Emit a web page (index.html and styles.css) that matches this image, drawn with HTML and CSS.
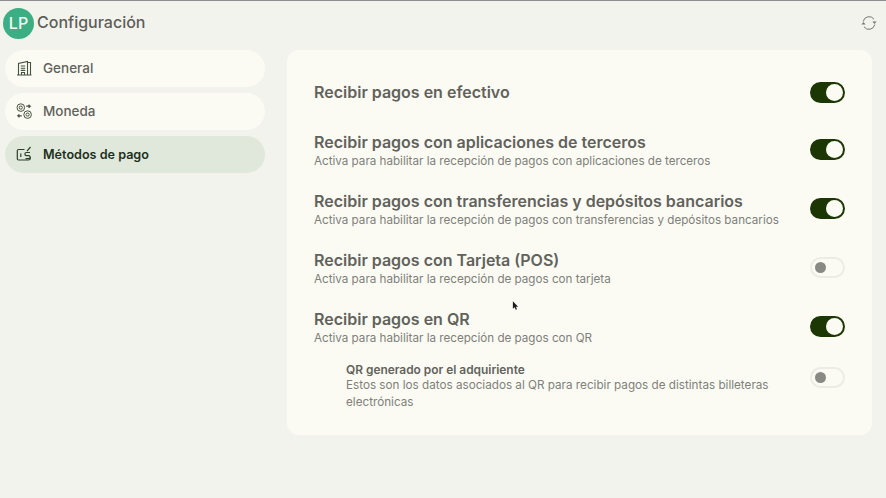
FILE: index.html
```html
<!DOCTYPE html>
<html lang="es">
<head>
<meta charset="utf-8">
<title>Configuración</title>
<link rel="stylesheet" href="styles.css">
</head>
<body>
<div class="app">
  <header class="topbar">
    <div class="brand">
      <span class="avatar">LP</span>
      <h1 class="page-title">Configuración</h1>
    </div>
    <svg class="refresh" viewBox="0 0 16 16" width="16" height="16" fill="none" stroke="#77776f" stroke-width="1">
      <path d="M2.2 6.5A6 6 0 0 1 13 4.2"/><path d="M13.8 9.5A6 6 0 0 1 3 11.8"/>
      <path d="M11.4 6.6h4.2L13.5 9z" fill="#77776f" stroke="none"/><path d="M.4 9.4h4.2L2.5 7z" fill="#77776f" stroke="none"/>
    </svg>
  </header>
  <div class="main">
    <nav class="sidebar">
      <a class="nav-item"><svg class="nav-icon" viewBox="0 0 16 16" fill="none" stroke="#44513f" stroke-width="1.1"><path d="M2.5 15V3.5L11.5 1.5V15M11.5 2.5H14.5V15M1 15H15.5M4.8 6H9.2M4.8 8.2H9.2M4.8 10.4H9.2M5.5 15V12.5H8.5V15"/></svg><span>General</span></a>
      <a class="nav-item"><svg class="nav-icon" viewBox="0 0 16 16" fill="none" stroke="#44513f" stroke-width="1"><circle cx="4.8" cy="4.6" r="3.8"/><circle cx="4.8" cy="4.6" r="1.6"/><circle cx="11.6" cy="11.6" r="3.8"/><circle cx="11.6" cy="11.6" r="1.6"/><path d="M10.2 3.2H14M12.6 1.8L14.2 3.2 12.6 4.8M5.8 12.8H2M3.4 11.4L1.8 12.8 3.4 14.4" stroke-width="1.2"/></svg><span>Moneda</span></a>
      <a class="nav-item active"><svg class="nav-icon" viewBox="0 0 16 16" fill="none" stroke="#2f4029" stroke-width="1.2"><path d="M8.5 3.5H2.5A1.2 1.2 0 0 0 1.3 4.7V12.8A1.2 1.2 0 0 0 2.5 14H12.5A1.8 1.8 0 0 0 14.3 12.2V11M4.8 7.5V11"/><path d="M14.5 1L11 5.2M14 6.5H10.5A1.6 1.6 0 0 0 10.5 9.7H13A1.5 1.5 0 0 1 13 12.6H9.5"/></svg><span>Métodos de pago</span></a>
    </nav>
    <section class="card">
      <div class="row row-first">
        <div class="row-text"><div class="row-title">Recibir pagos en efectivo</div></div>
        <span class="switch on"></span>
      </div>
      <div class="row">
        <div class="row-text"><div class="row-title">Recibir pagos con aplicaciones de terceros</div><div class="row-desc">Activa para habilitar la recepción de pagos con aplicaciones de terceros</div></div>
        <span class="switch on"></span>
      </div>
      <div class="row">
        <div class="row-text"><div class="row-title">Recibir pagos con transferencias y depósitos bancarios</div><div class="row-desc">Activa para habilitar la recepción de pagos con transferencias y depósitos bancarios</div></div>
        <span class="switch on"></span>
      </div>
      <div class="row">
        <div class="row-text"><div class="row-title">Recibir pagos con Tarjeta (POS)</div><div class="row-desc">Activa para habilitar la recepción de pagos con tarjeta</div></div>
        <span class="switch"></span>
      </div>
      <div class="row">
        <div class="row-text"><div class="row-title">Recibir pagos en QR</div><div class="row-desc">Activa para habilitar la recepción de pagos con QR</div></div>
        <span class="switch on"></span>
      </div>
      <div class="row row-sub">
        <div class="row-text"><div class="sub-title">QR generado por el adquiriente</div><div class="sub-desc">Estos son los datos asociados al QR para recibir pagos de distintas billeteras electrónicas</div></div>
        <span class="switch"></span>
      </div>
    </section>
  </div>
  <svg class="cursor" viewBox="0 0 8 12" width="7" height="11"><path d="M1 0v8.5l2-1.7 1.3 3 1.4-.6-1.3-2.9H7z" fill="#1c1c1c"/></svg>
</div>
</body>
</html>
```
FILE: styles.css
```css
* { box-sizing: border-box; }
html, body { margin: 0; height: 100%; }
body {
  background: #f3f3ee;
  font-family: "Inter", "Liberation Sans", sans-serif;
  color: #62625c;
  overflow: hidden;
}
.app {
  position: relative;
  height: 498px;
  border-top: 1px solid #8f8c92;
}
.topbar {
  display: flex;
  align-items: center;
  justify-content: space-between;
  height: 49px;
  padding: 0 9px 5px 3px;
}
.brand { display: flex; align-items: center; }
.avatar {
  width: 31px;
  height: 31px;
  border-radius: 50%;
  background: #3cae84;
  color: #f4fbf5;
  font-size: 16px;
  font-weight: 500;
  display: flex;
  align-items: center;
  justify-content: center;
}
.page-title {
  margin: 0 0 3px 3px;
  font-size: 16px;
  font-weight: 500;
  color: #5e5e59;
}
.refresh { display: block; }
.main {
  display: flex;
  align-items: flex-start;
  gap: 22px;
  padding: 0 14px 0 5px;
}
.sidebar {
  width: 260px;
  display: flex;
  flex-direction: column;
  gap: 6px;
}
.nav-item {
  height: 37px;
  border-radius: 19px;
  background: #fbfbf4;
  display: flex;
  align-items: center;
  padding-left: 11px;
  gap: 11px;
  font-size: 13.5px;
  font-weight: 500;
  color: #62625c;
}
.nav-item span { padding-bottom: 2px; }
.nav-item.active {
  background: #e0e8dc;
  color: #20301c;
  font-size: 12.6px;
  font-weight: 600;
}
.nav-item.active span { padding-bottom: 0; }
.nav-icon { width: 16px; height: 16px; flex: none; margin-bottom: 1px; }
.card {
  width: 585px;
  height: 385px;
  background: #fbfbf4;
  border-radius: 12px;
  padding: 32px 27px 0 27px;
  display: flex;
  flex-direction: column;
}
.row {
  display: flex;
  align-items: center;
  justify-content: space-between;
  height: 39px;
  margin-bottom: 20px;
}
.row-text { align-self: flex-start; padding-top: 2px; }
.row-first { height: 21px; margin-bottom: 27px; }
.row-first .row-text { padding-top: 1px; }
.row-title {
  font-size: 16px;
  font-weight: 600;
  line-height: 20px;
  margin-bottom: 1px;
  color: #62625c;
}
.row-first .row-title { line-height: 19px; margin-bottom: 0; }
.row-desc {
  font-size: 11.65px;
  line-height: 17px;
  color: #80807a;
}
.row-sub {
  height: auto;
  align-items: flex-start;
  padding-left: 32px;
  margin-top: -4px;
  margin-bottom: 0;
}
.row-sub .switch { margin-top: 5px; }
.row-sub .row-text { width: 440px; padding-top: 0; }
.sub-title {
  font-size: 11.9px;
  font-weight: 600;
  line-height: 15px;
  color: #62625c;
}
.sub-desc {
  font-size: 11.7px;
  line-height: 17px;
  color: #80807a;
}
.switch {
  position: relative;
  flex: none;
  width: 35px;
  height: 21px;
  border-radius: 11px;
  border: 2px solid #ecece6;
  background: #fbfbf4;
}
.switch::after {
  content: "";
  position: absolute;
  left: 3px;
  top: 3px;
  width: 11px;
  height: 11px;
  border-radius: 50%;
  background: #8a8a85;
}
.switch.on { background: #1c3704; border-color: #1c3704; }
.switch.on::after {
  left: 14px;
  top: 0;
  width: 17px;
  height: 17px;
  background: #fbfbf4;
}
.cursor { position: absolute; left: 512px; top: 300px; }
```
